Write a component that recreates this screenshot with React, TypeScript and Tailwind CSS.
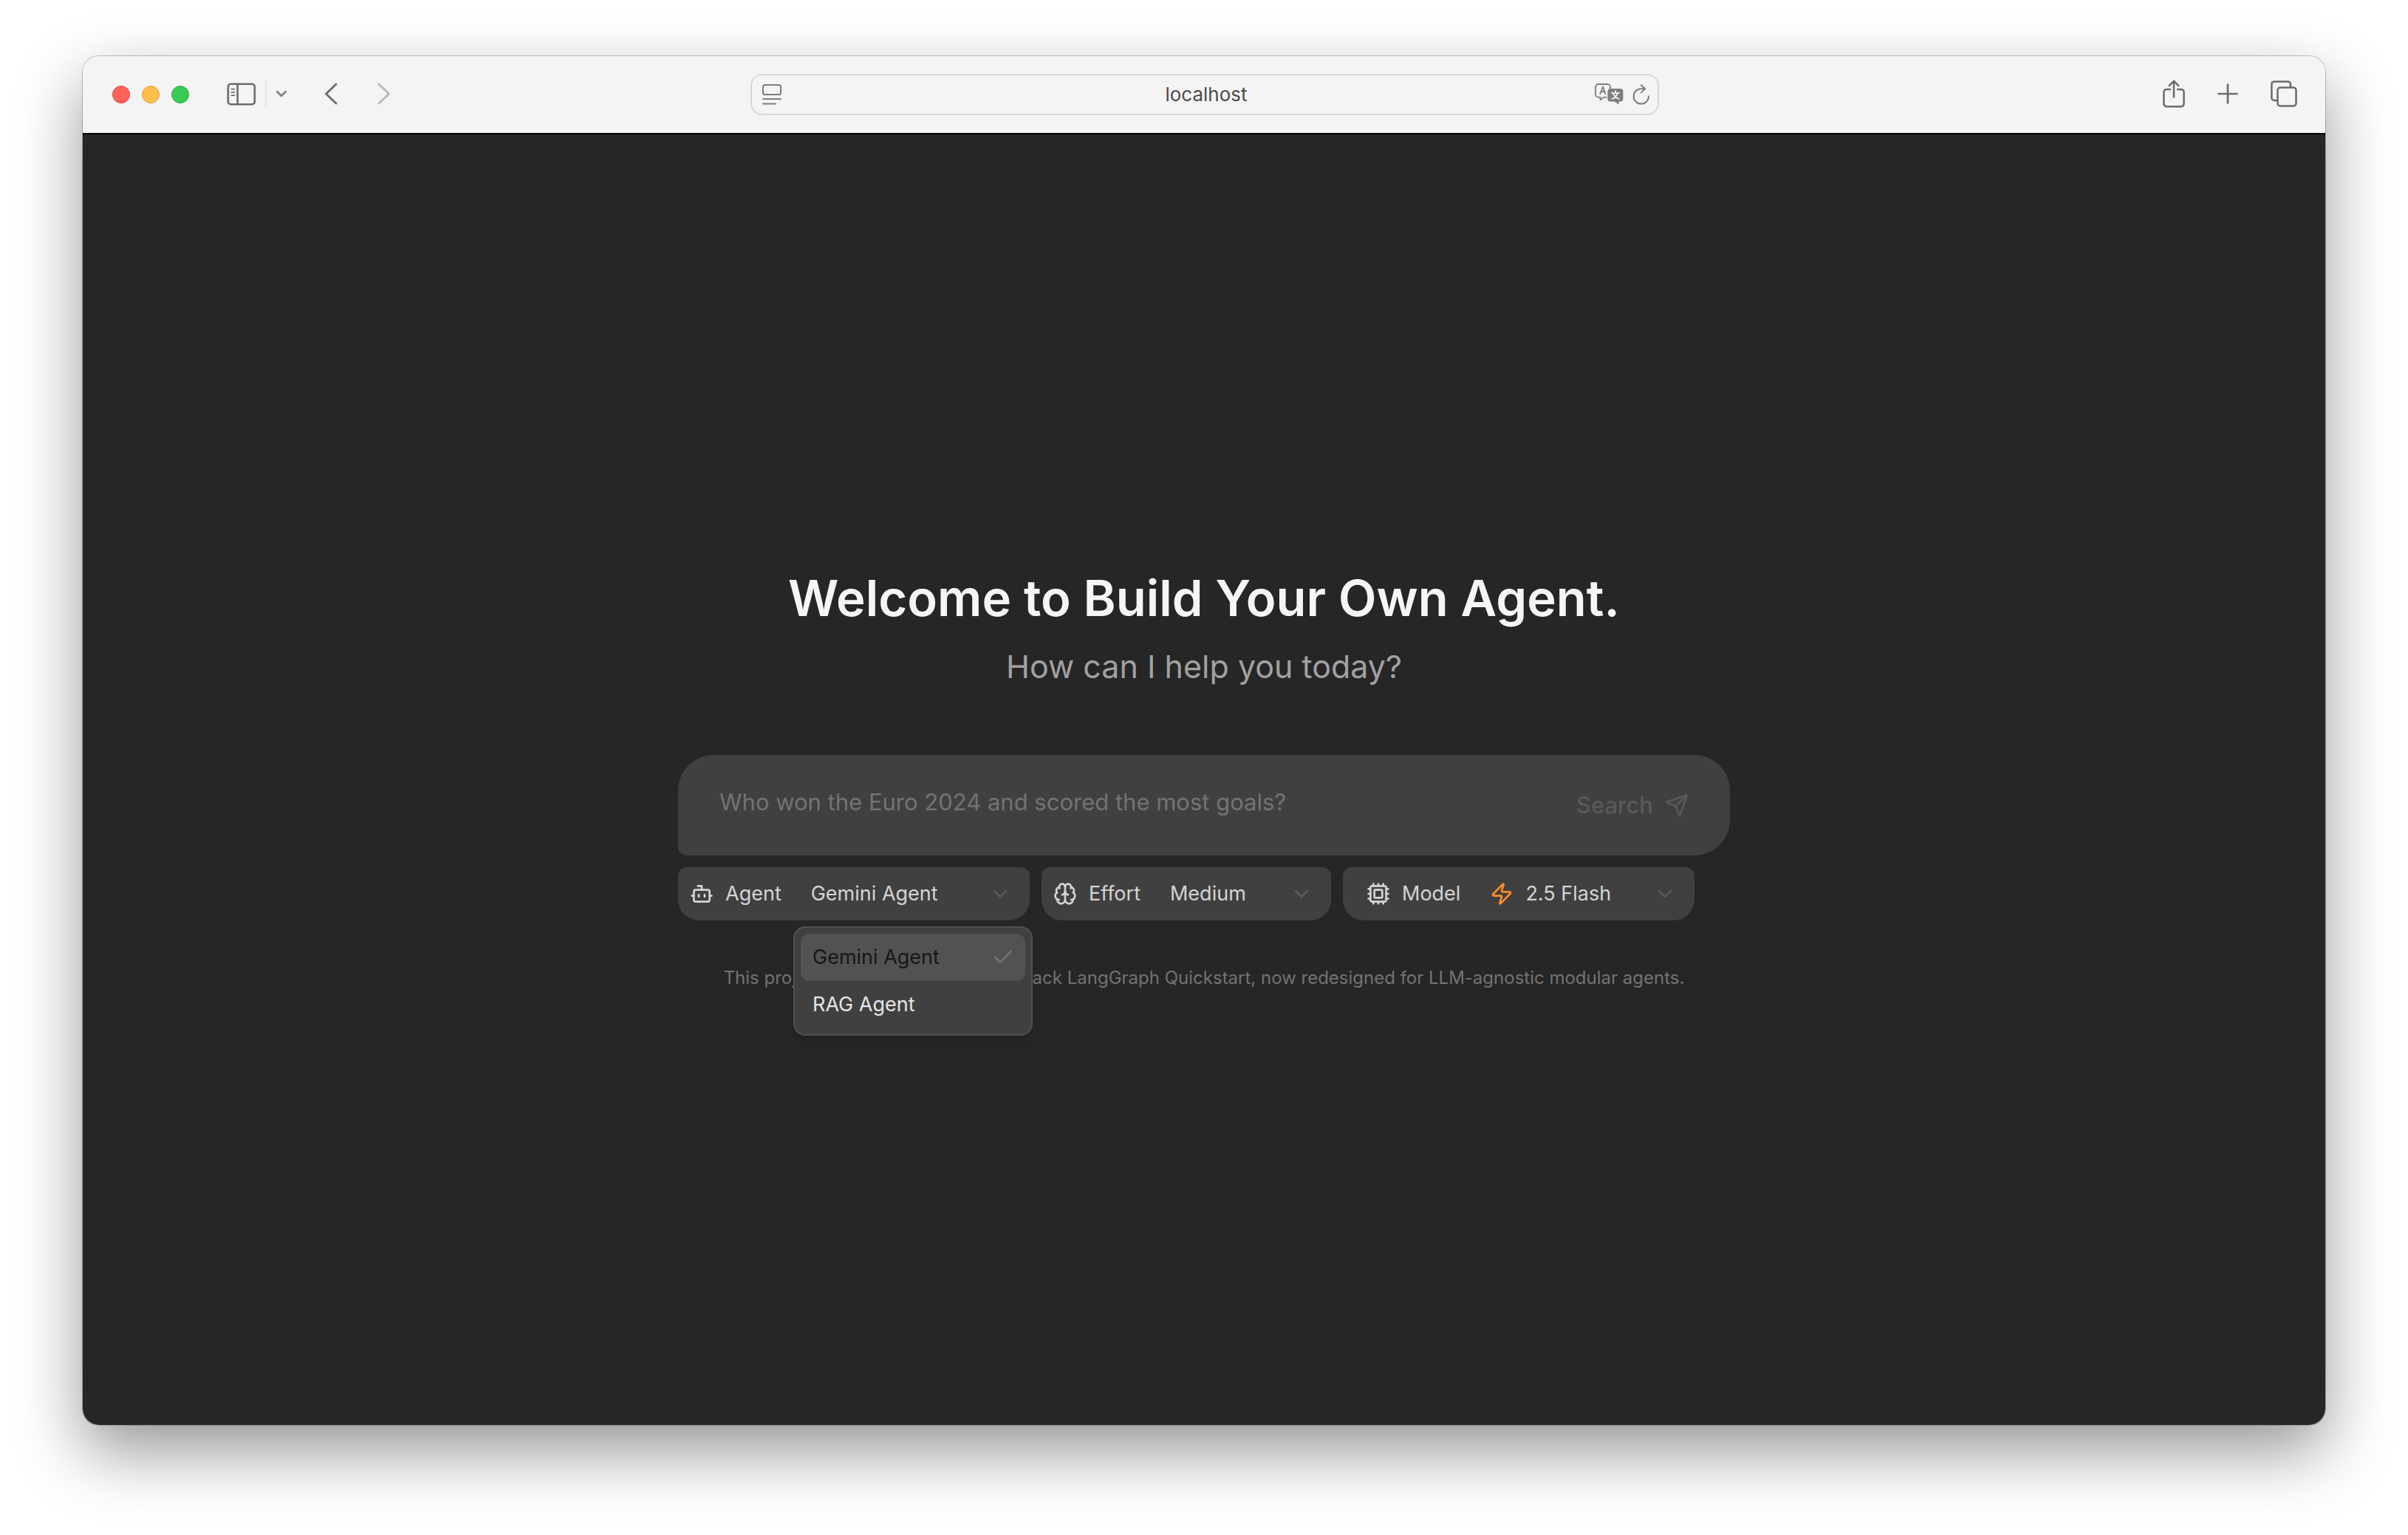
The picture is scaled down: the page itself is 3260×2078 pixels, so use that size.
import { useState } from "react";
import type { ReactNode } from "react";
import { Bot, Brain, Check, ChevronDown, Cpu, Send, Zap } from "lucide-react";

function SidebarIcon() {
  return (
    <svg className="h-[31px] w-10" viewBox="0 0 40 31" fill="none" stroke="currentColor" strokeWidth="2.6" strokeLinecap="round">
      <rect x="1.8" y="1.8" width="36" height="27.4" rx="3.6" />
      <path d="M14.6 2v27" />
      <path strokeWidth="1.8" d="M6.4 8.6h4M6.4 12.9h4M6.4 17.2h4" />
    </svg>
  );
}

function ReaderIcon() {
  return (
    <svg className="h-7 w-[26px]" viewBox="0 0 26 28" fill="none" stroke="currentColor" strokeWidth="2" strokeLinecap="round">
      <rect x="1" y="1" width="24" height="13" rx="2.6" />
      <path d="M1 20h24M1 26.6h17" />
    </svg>
  );
}

function TranslateIcon() {
  return (
    <svg className="h-[30px] w-[39px]" viewBox="0 0 39 30" fill="none" stroke="currentColor" strokeWidth="1.8" strokeLinecap="round" strokeLinejoin="round">
      <path d="M15.5 18.6h-3.4l-4.6 3.6v-3.6H5a4 4 0 0 1-4-4V5a4 4 0 0 1 4-4h12a4 4 0 0 1 4 4v1.4" />
      <path d="M7.3 14.2 11 4.4l3.7 9.8M8.5 11h5" />
      <path
        fill="currentColor"
        stroke="none"
        d="M21.4 7h13a4 4 0 0 1 4 4v9.4a4 4 0 0 1-4 4h-1.8v3.2c0 .6-.6.8-1.1.4L27 24.4h-5.6a4 4 0 0 1-4-4V11a4 4 0 0 1 4-4Z"
      />
      <path stroke="#f4f4f4" strokeWidth="1.7" d="M23 12.8h10M28 10.2v2.6M31 12.8c-1 4-4 7-8 8.200M25 12.8c1 4 4 7 8 8.2" />
    </svg>
  );
}

function ReloadIcon() {
  return (
    <svg className="h-7 w-6" viewBox="0 0 24 28" fill="none" stroke="currentColor" strokeWidth="2" strokeLinecap="round" strokeLinejoin="round">
      <path d="M22 16.2A10.2 10.2 0 1 1 11.8 6.2h5" />
      <path d="m11.800 1.2 5.2 5-5.2 5.2" />
    </svg>
  );
}

function ShareIcon() {
  return (
    <svg className="h-[38px] w-[30px]" viewBox="0 0 30 38" fill="none" stroke="currentColor" strokeWidth="2.5" strokeLinecap="round" strokeLinejoin="round">
      <path strokeLinecap="butt" d="M11 13H5a3.6 3.6 0 0 0-3.6 3.6v16A3.6 3.6 0 0 0 5 36.2h20a3.6 3.6 0 0 0 3.6-3.6v-16A3.6 3.6 0 0 0 25 13h-6" />
      <path d="M15 23.6V2M8.8 7.8 15 1.6l6.2 6.2" />
    </svg>
  );
}

function PlusIcon() {
  return (
    <svg className="h-7 w-7" viewBox="0 0 28 28" fill="none" stroke="currentColor" strokeWidth="2.7" strokeLinecap="round">
      <path d="M14 1.6v24.8M1.6 14h24.8" />
    </svg>
  );
}

function TabsIcon() {
  return (
    <svg className="h-9 w-9" viewBox="0 0 36 36" fill="none" stroke="currentColor" strokeWidth="2.5" strokeLinejoin="round">
      <path d="M9.5 27H5a3.6 3.6 0 0 1-3.6-3.6V5A3.6 3.6 0 0 1 5 1.4h18.4A3.6 3.6 0 0 1 27 5v4.5" />
      <rect x="9.5" y="9.5" width="25" height="25" rx="3.6" />
    </svg>
  );
}

function Angle({ d, className }: { d: string; className: string }) {
  return (
    <svg className={className} viewBox="0 0 18 30" fill="none" stroke="currentColor" strokeWidth="2.8" strokeLinecap="round" strokeLinejoin="round">
      <path d={d} />
    </svg>
  );
}

function Toolbar() {
  return (
    <header className="flex h-[104px] items-center justify-between bg-[#f4f4f4] pr-[38px] pl-10 text-[#6b6b6b]">
      <div className="flex flex-1 items-center">
        <div className="mr-[51px] flex gap-4">
          <button aria-label="Close" className="size-6 rounded-full border border-[#e2463f] bg-[#ff625b]" />
          <button aria-label="Minimize" className="size-6 rounded-full border border-[#dfa033] bg-[#ffbe4b]" />
          <button aria-label="Zoom" className="size-6 rounded-full border border-[#28ad3c] bg-[#39ca53]" />
        </div>
        <div className="flex items-center pb-[2px]">
          <button aria-label="Show sidebar"><SidebarIcon /></button>
          <span className="mx-3 h-9 w-[2px] bg-[#e4e4e4]" />
          <button aria-label="Tab groups" className="text-[#85838a]">
            <svg className="h-4 w-4" viewBox="0 0 16 16" fill="none" stroke="currentColor" strokeWidth="2.8" strokeLinecap="round" strokeLinejoin="round">
              <path d="m2.400 5.2 5.6 5.6 5.6-5.6" />
            </svg>
          </button>
          <button aria-label="Back" className="ml-[50px]"><Angle className="h-[30px] w-[18px]" d="M16 2 2.4 15 16 28" /></button>
          <button aria-label="Forward" className="ml-[54px] text-[#b9b9b9]"><Angle className="h-[30px] w-[18px]" d="M2 2 15.6 15 2 28" /></button>
        </div>
      </div>
      <div className="flex h-14 w-[1230px] items-center rounded-2xl border-2 border-[#d8d8d8] pr-[10px] pl-[14px] text-[#7d7d7d]">
        <div className="flex flex-1"><button aria-label="Reader"><ReaderIcon /></button></div>
        <input aria-label="Address" defaultValue="localhost" className="w-[400px] bg-transparent text-center text-[26px] leading-8 text-[#4b4b4b] outline-none" />
        <div className="flex flex-1 items-center justify-end gap-3">
          <button aria-label="Translate"><TranslateIcon /></button>
          <button aria-label="Reload"><ReloadIcon /></button>
        </div>
      </div>
      <div className="flex flex-1 items-center justify-end gap-11 pb-[2px]">
        <button aria-label="Share"><ShareIcon /></button>
        <button aria-label="New tab"><PlusIcon /></button>
        <button aria-label="Tab overview"><TabsIcon /></button>
      </div>
    </header>
  );
}

const chip = "relative flex h-[72px] items-center rounded-t-xl rounded-b-[28px] bg-neutral-700 text-[27px] leading-10 text-neutral-300";

function SelectChip({ id, label, icon, lead, options, className }: {
  id: string;
  label: string;
  icon: ReactNode;
  lead?: ReactNode;
  options: string[];
  className: string;
}) {
  return (
    <div className={`${chip} ${className}`}>
      <label htmlFor={id} className="flex items-center gap-4">{icon}{label}</label>
      <div className="ml-10 flex flex-1 items-center gap-4">
        {lead}
        <select id={id} className="min-w-0 flex-1 appearance-none bg-transparent outline-none">
          {options.map((o) => <option key={o}>{o}</option>)}
        </select>
        <ChevronDown className="size-8 text-neutral-500 opacity-50" />
      </div>
    </div>
  );
}

const agents = ["Gemini Agent", "RAG Agent"];

function AgentChip() {
  const [open, setOpen] = useState(true);
  const [agent, setAgent] = useState(agents[0]);
  return (
    <div className={`${chip} w-[476px] pr-6 pl-4`}>
      <span id="agent-label" className="flex items-center gap-4"><Bot className="size-8" />Agent</span>
      <button aria-labelledby="agent-label" aria-haspopup="listbox" aria-expanded={open} onClick={() => setOpen(!open)} className="ml-10 flex flex-1 items-center justify-between">
        {agent}
        <ChevronDown className="size-8 text-neutral-500 opacity-50" />
      </button>
      {open && (
        <ul role="listbox" aria-labelledby="agent-label" className="absolute top-20 left-[156px] z-10 h-[148px] w-[324px] rounded-2xl border-2 border-neutral-600 bg-neutral-700 p-2 shadow-lg">
          {agents.map((a) => (
            <li
              key={a}
              role="option"
              aria-selected={a === agent}
              onClick={() => { setAgent(a); setOpen(false); }}
              className={`flex h-16 items-center justify-between rounded-xl pr-[14px] pl-4 ${a === agent ? "bg-neutral-600 text-neutral-900" : "text-neutral-200"}`}
            >
              {a}
              {a === agent && <Check className="size-8 text-neutral-500" />}
            </li>
          ))}
        </ul>
      )}
    </div>
  );
}

export default function App() {
  return (
    <div className="flex min-h-screen flex-col bg-white px-28 pt-[76px] pb-[149px] font-['Inter',sans-serif]">
      <div className="flex flex-1 flex-col overflow-hidden rounded-[22px] shadow-[0_0_0_1px_rgba(0,0,0,0.22),0_36px_90px_rgba(0,0,0,0.42)]">
        <Toolbar />
        <main className="flex flex-1 flex-col items-center justify-center border-t-2 border-black bg-neutral-800">
          <h1 className="text-[67px] leading-[80px] font-semibold text-neutral-100">Welcome to Build Your Own Agent.</h1>
          <p className="mt-5 text-[43px] leading-[64px] text-neutral-400">How can I help you today?</p>
          <div className="mt-[88px] w-[1424px]">
            <form onSubmit={(e) => e.preventDefault()} className="flex h-[136px] items-center rounded-[48px] rounded-bl-xl bg-neutral-700 pr-14 pl-14">
              <input aria-label="Question" placeholder="Who won the Euro 2024 and scored the most goals?" className="min-w-0 flex-1 bg-transparent pb-2 text-[31px] leading-12 text-neutral-100 outline-none placeholder:text-neutral-500" />
              <button className="flex items-center gap-4 text-[31px] leading-12 font-medium text-neutral-500 opacity-50">
                Search
                <Send className="size-8" />
              </button>
            </form>
            <div className="mt-4 flex gap-4">
              <AgentChip />
              <SelectChip id="effort" label="Effort" className="w-[392px] pr-6 pl-4" icon={<Brain className="size-8" />} options={["Medium", "Low", "High"]} />
              <SelectChip id="model" label="Model" className="w-[476px] pr-6 pl-8" icon={<Cpu className="size-8" />} lead={<Zap className="size-8 text-[#ff8b2b]" />} options={["2.5 Flash", "2.5 Pro"]} />
            </div>
          </div>
          <p className="mt-[60px] text-[24px] leading-9 text-neutral-500">
            This project builds on Google's Fullstack LangGraph Quickstart, now redesigned for LLM-agnostic modular agents.
          </p>
        </main>
      </div>
    </div>
  );
}
